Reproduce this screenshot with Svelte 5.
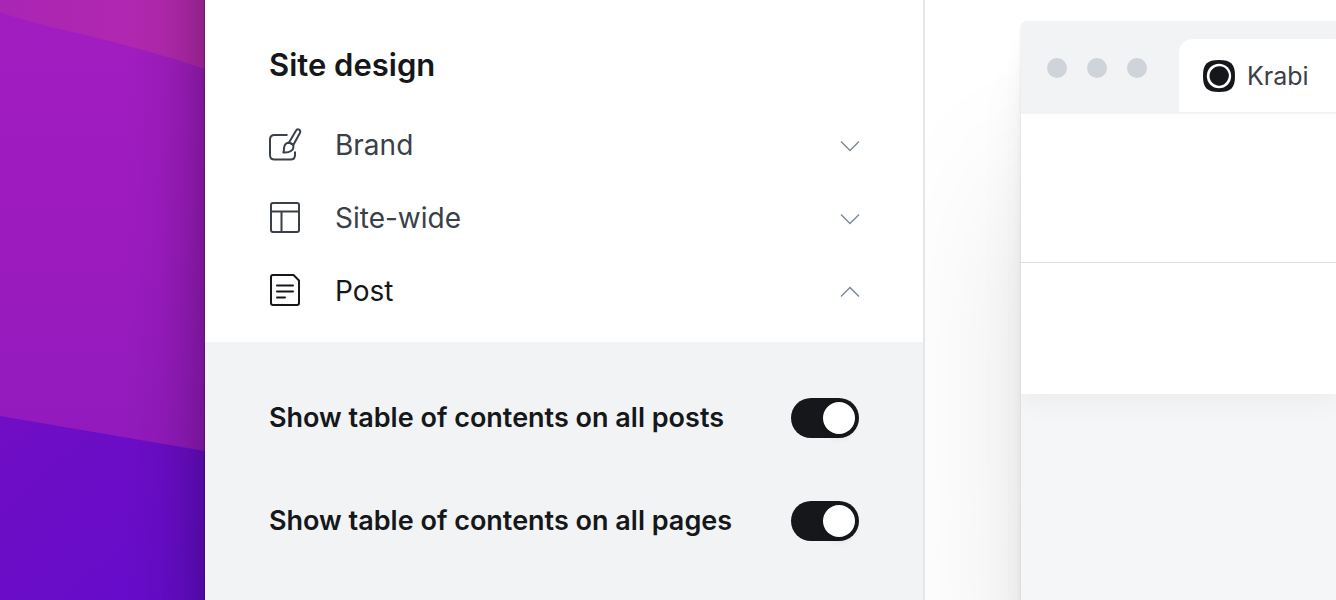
<script lang="ts">
	type Section = { id: string; label: string; open: boolean };
	type Setting = { id: string; label: string; on: boolean };

	let sections = $state<Section[]>([
		{ id: 'brand', label: 'Brand', open: false },
		{ id: 'site', label: 'Site-wide', open: false },
		{ id: 'post', label: 'Post', open: true }
	]);

	let settings = $state<Setting[]>([
		{ id: 'toc-posts', label: 'Show table of contents on all posts', on: true },
		{ id: 'toc-pages', label: 'Show table of contents on all pages', on: true }
	]);

	const postOpen = $derived(sections[2].open);

	function toggle(section: Section) {
		const next = !section.open;
		for (const s of sections) s.open = false;
		section.open = next;
	}
</script>

<div class="desktop">
	<div class="wallpaper">
		<svg viewBox="0 0 205 600" preserveAspectRatio="none" aria-hidden="true">
			<defs>
				<linearGradient id="pink" x1="0" y1="0" x2="1" y2="0">
					<stop offset="0" stop-color="#a925b4" />
					<stop offset="1" stop-color="#b529ad" />
				</linearGradient>
				<linearGradient id="purple" x1="0" y1="0" x2="0" y2="1">
					<stop offset="0" stop-color="#a21dc0" />
					<stop offset="0.5" stop-color="#9c1bbf" />
					<stop offset="1" stop-color="#911abc" />
				</linearGradient>
				<linearGradient id="indigo" x1="0" y1="0" x2="1" y2="1">
					<stop offset="0" stop-color="#700ec4" />
					<stop offset="1" stop-color="#640bcb" />
				</linearGradient>
			</defs>
			<rect width="205" height="80" fill="url(#pink)" />
			<path d="M0 12 C30 23 70 31 110 41 C150 52 180 60 205 69 V455 H0Z" fill="url(#purple)" />
			<path d="M0 416 L205 451 V600 H0Z" fill="url(#indigo)" />
		</svg>
	</div>

	<aside class="sidebar">
		<h1>Site design</h1>
		<nav>
			{#each sections as section (section.id)}
				<button class="section" class:open={section.open} aria-expanded={section.open} onclick={() => toggle(section)}>
					<svg class="icon" viewBox="0 0 32 32" aria-hidden="true">
						{#if section.id === 'brand'}
							<path d="M18.500 6H5.500Q1 6 1 10.500V26Q1 30.500 5.500 30.500H21.500Q26 30.500 26 26V22.500" />
							<path d="M20 13.500 26.800 1.900C28.500-1.200 32.500 1 30.900 4L24.300 16Z" />
							<path d="M19.700 13.700C22.500 14 24.300 15.500 24.500 17.500C24.500 21 21 24 14.300 23.400C15.500 21.500 14.500 20 15.300 17.500C16 15 17.700 13.700 19.700 13.700Z" />
						{:else if section.id === 'site'}
							<rect x="2" y="1" width="28" height="29" rx="2" />
							<path d="M2 9.500H30M12.500 9.500V30" />
						{:else}
							<path d="M4 0H24.500L30 5.500V28Q30 30 28 30H4Q2 30 2 28V2Q2 0 4 0Z" />
							<path d="M8 10.500H24M8 16.500H24M8 22.500H16" stroke-linecap="round" />
						{/if}
					</svg>
					<span>{section.label}</span>
					<svg class="chevron" viewBox="0 0 20 12" aria-hidden="true">
						<path d={section.open ? 'M2 11.500 11 2.500 20 11.500' : 'M2 2.500 11 11.500 20 2.500'} />
					</svg>
				</button>
			{/each}
		</nav>

		{#if postOpen}
			<div class="panel">
				{#each settings as setting (setting.id)}
					<div class="setting">
						<label for={setting.id}>{setting.label}</label>
						<input type="checkbox" role="switch" id={setting.id} bind:checked={setting.on} />
					</div>
				{/each}
			</div>
		{/if}
	</aside>

	<main class="preview">
		<div class="browser">
			<div class="tabs">
				<div class="dots"><i></i><i></i><i></i></div>
				<div class="tab">
					<svg class="favicon" viewBox="0 0 32 32" aria-hidden="true">
						<path d="M16 0C28 0 32 4 32 16S28 32 16 32 0 28 0 16 4 0 16 0Z" fill="#15171a" />
						<circle cx="16" cy="16" r="12.200" fill="#fff" />
						<path d="M16 6.200C19 6 21.500 7 23.500 9.500C25.500 12 26.600 14.500 25.500 18C24 22.500 20.500 26 16 25.700C11 25.500 6.500 21.500 6.500 16C6.500 10.500 11 6.400 16 6.200Z" fill="#15171a" />
					</svg>
					<span>Krabi</span>
				</div>
			</div>
			<div class="content">
				<div class="page">
					<div class="page-head"></div>
					<div class="page-row"></div>
				</div>
			</div>
		</div>
	</main>
</div>

<style>
	:global(body) {
		margin: 0;
	}

	.desktop {
		display: flex;
		min-height: 100vh;
		overflow: hidden;
		font-family: Inter, sans-serif;
		color: #15171a;
		background: #fff;
	}

	.wallpaper {
		flex: 0 1 205px;
		display: flex;
		position: relative;
		background: #9c1bbf;
	}

	.wallpaper svg {
		width: 100%;
		height: 100vh;
	}

	/* shadow cast by the app window */
	.wallpaper::after {
		content: '';
		position: absolute;
		inset: 0;
		background: linear-gradient(to left, rgba(0, 0, 0, 0.4) 0, rgba(0, 0, 0, 0.2) 2px, rgba(0, 0, 0, 0.11) 20px, rgba(0, 0, 0, 0.04) 45px, transparent 80px);
	}

	.sidebar {
		box-sizing: border-box;
		flex: 0 0 720px;
		display: flex;
		flex-direction: column;
		border-right: 2px solid #e3e7eb;
		background: #fff;
	}

	h1 {
		margin: 0;
		padding: 45px 64px 23px;
		font-size: 31px;
		font-weight: 600;
		line-height: 40px;
	}

	nav {
		display: flex;
		flex-direction: column;
		padding-bottom: 15px;
	}

	.section {
		display: flex;
		align-items: center;
		gap: 34px;
		height: 73px;
		padding: 0 64px;
		border: 0;
		background: none;
		font: inherit;
		font-size: 28px;
		text-align: left;
		color: #394047;
		cursor: pointer;
	}

	.section.open {
		color: #15171a;
	}

	.section span {
		flex: 1;
	}

	.icon {
		width: 32px;
		height: 32px;
		fill: none;
		stroke: currentColor;
		stroke-width: 2;
		stroke-linejoin: round;
		overflow: visible;
	}

	.chevron {
		width: 20px;
		height: 12px;
		fill: none;
		stroke: #7c8b9a;
		stroke-width: 1.5;
		overflow: visible;
	}

	.panel {
		flex: 1;
		display: flex;
		flex-direction: column;
		gap: 63px;
		padding: 56px 64px;
		background: #f1f3f4;
	}

	.setting {
		display: flex;
		align-items: center;
		justify-content: space-between;
		height: 40px;
		font-size: 27px;
		font-weight: 600;
	}

	.setting label {
		padding-bottom: 2px;
	}

	input {
		appearance: none;
		display: flex;
		box-sizing: border-box;
		width: 68px;
		height: 40px;
		margin: 0;
		padding: 4px;
		border-radius: 20px;
		background: #ced4d9;
		cursor: pointer;
	}

	input::before {
		content: '';
		width: 32px;
		height: 32px;
		border-radius: 50%;
		background: #fff;
		box-shadow: 0 4px 6px rgba(0, 0, 0, 0.1);
	}

	input:checked {
		justify-content: flex-end;
		background: #15171a;
	}

	.preview {
		flex: 1;
		display: flex;
		min-width: 0;
		padding: 21px 0 0 96px;
		overflow: hidden;
	}

	.browser {
		flex: 1;
		display: flex;
		flex-direction: column;
		border-radius: 6px 0 0 0;
		background: #f5f6f8;
		box-shadow:
			0 2px 3px rgba(0, 0, 0, 0.1),
			0 20px 20px rgba(0, 0, 0, 0.04),
			0 60px 50px rgba(0, 0, 0, 0.05),
			0 160px 160px rgba(0, 0, 0, 0.11);
	}

	.tabs {
		display: flex;
		align-items: center;
		gap: 32px;
		height: 93px;
		padding-left: 26px;
		border-radius: 6px 0 0 0;
		background: #f1f3f4;
	}

	.dots {
		display: flex;
		gap: 20px;
	}

	.dots i {
		width: 20px;
		height: 20px;
		border-radius: 50%;
		background: #ced4d9;
	}

	.tab {
		flex: 1;
		display: flex;
		align-items: center;
		gap: 12px;
		height: 73px;
		margin-top: 16px;
		padding-left: 24px;
		border-radius: 14px 0 0 0;
		background: #fff;
		font-size: 25px;
		color: #394047;
	}

	.favicon {
		width: 32px;
		height: 32px;
	}

	.content {
		flex: 1;
		overflow: hidden;
	}

	.page {
		background: #fff;
		box-shadow: 0 10px 24px rgba(0, 0, 0, 0.04);
	}

	.page-head {
		height: 148px;
		border-bottom: 1px solid #dddfe5;
	}

	.page-row {
		height: 131px;
	}
</style>
